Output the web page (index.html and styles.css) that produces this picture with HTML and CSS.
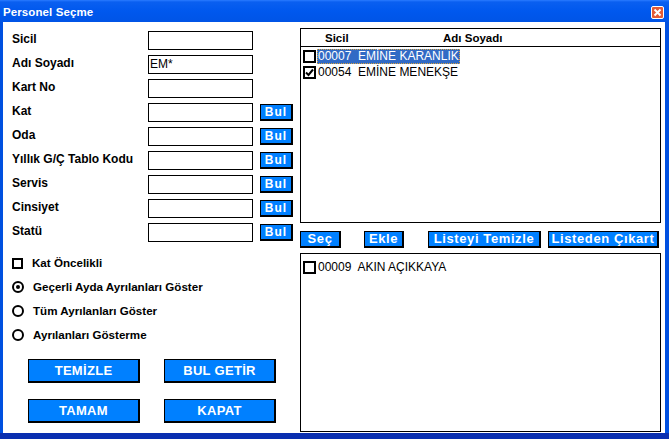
FILE: index.html
```html
<!DOCTYPE html>
<html lang="tr">
<head>
<meta charset="utf-8">
<title>Personel Seçme</title>
<link rel="stylesheet" href="styles.css">
</head>
<body>
<div class="window">
  <div class="titlebar">
    <span class="title">Personel Seçme</span>
    <span class="close">
      <svg width="13" height="13" viewBox="0 0 13 13"><rect x="0.5" y="0.5" width="12" height="12" rx="1.5" fill="#e35a36" stroke="#fff"/><path d="M3.5 3.5 L9.5 9.5 M9.5 3.5 L3.5 9.5" stroke="#fff" stroke-width="2"/></svg>
    </span>
  </div>
  <div class="client">
    <div class="left">
      <div class="fields">
        <div class="row"><span class="label">Sicil</span><span class="input"></span></div>
        <div class="row"><span class="label">Adı Soyadı</span><span class="input">EM*</span></div>
        <div class="row"><span class="label">Kart No</span><span class="input"></span></div>
        <div class="row"><span class="label">Kat</span><span class="input"></span><span class="bul">Bul</span></div>
        <div class="row"><span class="label">Oda</span><span class="input"></span><span class="bul">Bul</span></div>
        <div class="row"><span class="label">Yıllık G/Ç Tablo Kodu</span><span class="input"></span><span class="bul">Bul</span></div>
        <div class="row"><span class="label">Servis</span><span class="input"></span><span class="bul">Bul</span></div>
        <div class="row"><span class="label">Cinsiyet</span><span class="input"></span><span class="bul">Bul</span></div>
        <div class="row"><span class="label">Statü</span><span class="input"></span><span class="bul">Bul</span></div>
      </div>
      <div class="options">
        <div class="opt"><span class="box"></span><span class="opt-text">Kat Öncelikli</span></div>
        <div class="opt"><span class="radio on"></span><span class="opt-text">Geçerli Ayda Ayrılanları Göster</span></div>
        <div class="opt"><span class="radio"></span><span class="opt-text">Tüm Ayrılanları Göster</span></div>
        <div class="opt"><span class="radio"></span><span class="opt-text">Ayrılanları Gösterme</span></div>
      </div>
      <div class="actions">
        <span class="btn">TEMİZLE</span>
        <span class="btn">BUL GETİR</span>
        <span class="btn">TAMAM</span>
        <span class="btn">KAPAT</span>
      </div>
    </div>
    <div class="right">
      <div class="list list-top">
        <div class="list-head"><span class="h-sicil">Sicil</span><span class="h-ad">Adı Soyadı</span></div>
        <div class="items">
          <div class="item"><span class="cb"></span><span class="item-text selected">00007  EMİNE KARANLIK</span></div>
          <div class="item"><span class="cb checked"><svg width="9" height="9" viewBox="0 0 9 9"><path d="M1 4.5 L3.5 7 L8 1.5" fill="none" stroke="#000" stroke-width="2"/></svg></span><span class="item-text">00054  EMİNE MENEKŞE</span></div>
        </div>
      </div>
      <div class="toolbar">
        <span class="tbtn w-sec">Seç</span>
        <span class="tbtn w-ekle">Ekle</span>
        <span class="tbtn w-temizle">Listeyi Temizle</span>
        <span class="tbtn w-cikart">Listeden Çıkart</span>
      </div>
      <div class="list list-bottom">
        <div class="items items-bottom">
          <div class="item"><span class="cb"></span><span class="item-text">00009  AKIN AÇIKKAYA</span></div>
        </div>
      </div>
    </div>
  </div>
</div>
</body>
</html>
```
FILE: styles.css
```css
* { box-sizing: border-box; }
html, body { margin: 0; padding: 0; }
body { width: 669px; height: 439px; overflow: hidden; font-family: "Liberation Sans", Arial, sans-serif; }

.window {
  width: 669px;
  height: 439px;
  background: #0050e0;
  display: flex;
  flex-direction: column;
  border-bottom: 6px solid #0a2fb0;
}
.titlebar {
  height: 22px;
  flex: none;
  background: linear-gradient(#2a7bff 0px, #0a5ff0 2px, #0058ee 50%, #0054e6 100%);
  display: flex;
  align-items: center;
  padding: 0 5px 0 3px;
}
.title {
  color: #fff;
  font-family: "Liberation Sans", sans-serif;
  font-weight: bold;
  font-size: 11.5px;
  letter-spacing: 0.1px;
  flex: 1;
  padding-top: 1px;
}
.close { display: flex; width: 13px; height: 13px; margin-top: 3px; }

.client {
  flex: 1;
  margin: 0 4px 0 3px;
  background: #fff;
  display: flex;
}
.left {
  width: 294px;
  padding: 9px 0 0 9px;
}
.fields { display: flex; flex-direction: column; gap: 5px; }
.row { display: flex; align-items: center; height: 19px; }
.label {
  width: 136px;
  font-weight: bold;
  font-size: 12px;
  color: #000;
  padding-bottom: 4px;
}
.input {
  width: 105px;
  height: 19px;
  border: 1px solid #000;
  font-size: 12px;
  line-height: 17px;
  padding-left: 1px;
  color: #000;
}
.bul {
  margin-left: 7px;
  width: 33px;
  height: 17px;
  background: #0080ff;
  border: 1px solid #000;
  border-right-width: 2px;
  border-bottom-width: 2px;
  color: #fff;
  font-weight: bold;
  font-size: 12px;
  letter-spacing: 1px;
  text-align: center;
  line-height: 14px;
}

.options { margin-top: 9px; display: flex; flex-direction: column; }
.opt { height: 24px; display: flex; align-items: center; }
.box { width: 11px; height: 11px; border: 2px solid #000; flex: none; }
.radio { width: 12px; height: 12px; border: 2px solid #000; border-radius: 50%; flex: none; position: relative; }
.radio.on::after {
  content: "";
  position: absolute;
  left: 2px; top: 2px;
  width: 4px; height: 4px;
  border-radius: 50%;
  background: #000;
}
.opt-text { margin-left: 9px; font-weight: bold; font-size: 11.6px; color: #000; padding-bottom: 1px; }

.actions {
  margin: 12px 0 0 16px;
  display: grid;
  grid-template-columns: 112px 112px;
  column-gap: 24px;
  row-gap: 16px;
}
.btn {
  height: 24px;
  background: #0080ff;
  border: 1px solid #000;
  border-right-width: 2px;
  border-bottom-width: 2px;
  color: #fff;
  font-weight: bold;
  font-size: 13px;
  letter-spacing: 0.3px;
  text-align: center;
  line-height: 21px;
}

.right {
  width: 361px;
  margin-left: 3px;
  padding: 6px 0 1px 0;
  display: flex;
  flex-direction: column;
}
.list { border: 1px solid #000; background: #fff; }
.list-top { height: 195px; flex: none; }
.list-head {
  height: 18px;
  border-bottom: 1px solid #000;
  display: flex;
  align-items: center;
  font-weight: bold;
  font-size: 11.5px;
  padding-left: 24px;
}
.h-sicil { width: 118px; }
.items { padding: 1px 0 0 2px; display: flex; flex-direction: column; }
.items-bottom { padding-top: 5px; }
.item { height: 16px; display: flex; align-items: center; }
.cb {
  width: 13px; height: 13px; border: 2px solid #000; flex: none;
  display: flex; align-items: center; justify-content: center;
}
.item-text {
  margin-left: 1px;
  white-space: pre;
  font-size: 12px;
  color: #000;
  height: 15px;
  line-height: 13px;
  padding: 0;
  border: 1px solid transparent;
}
.item-text.selected {
  background: #316ac5;
  color: #fff;
  border: 1px dotted #d9a441;
}

.toolbar { display: flex; margin-top: 8px; height: 17px; flex: none; }
.tbtn {
  height: 17px;
  background: #0080ff;
  border: 1px solid #000;
  border-right-width: 2px;
  border-bottom-width: 2px;
  color: #fff;
  font-weight: bold;
  font-size: 13px;
  letter-spacing: 0.6px;
  text-align: center;
  line-height: 14px;
}
.w-sec { width: 41px; }
.w-ekle { width: 40px; margin-left: 23px; }
.w-temizle { width: 113px; margin-left: 24px; }
.w-cikart { width: 111px; margin-left: 7px; }
.list-bottom { flex: 1; margin-top: 5px; }
```
